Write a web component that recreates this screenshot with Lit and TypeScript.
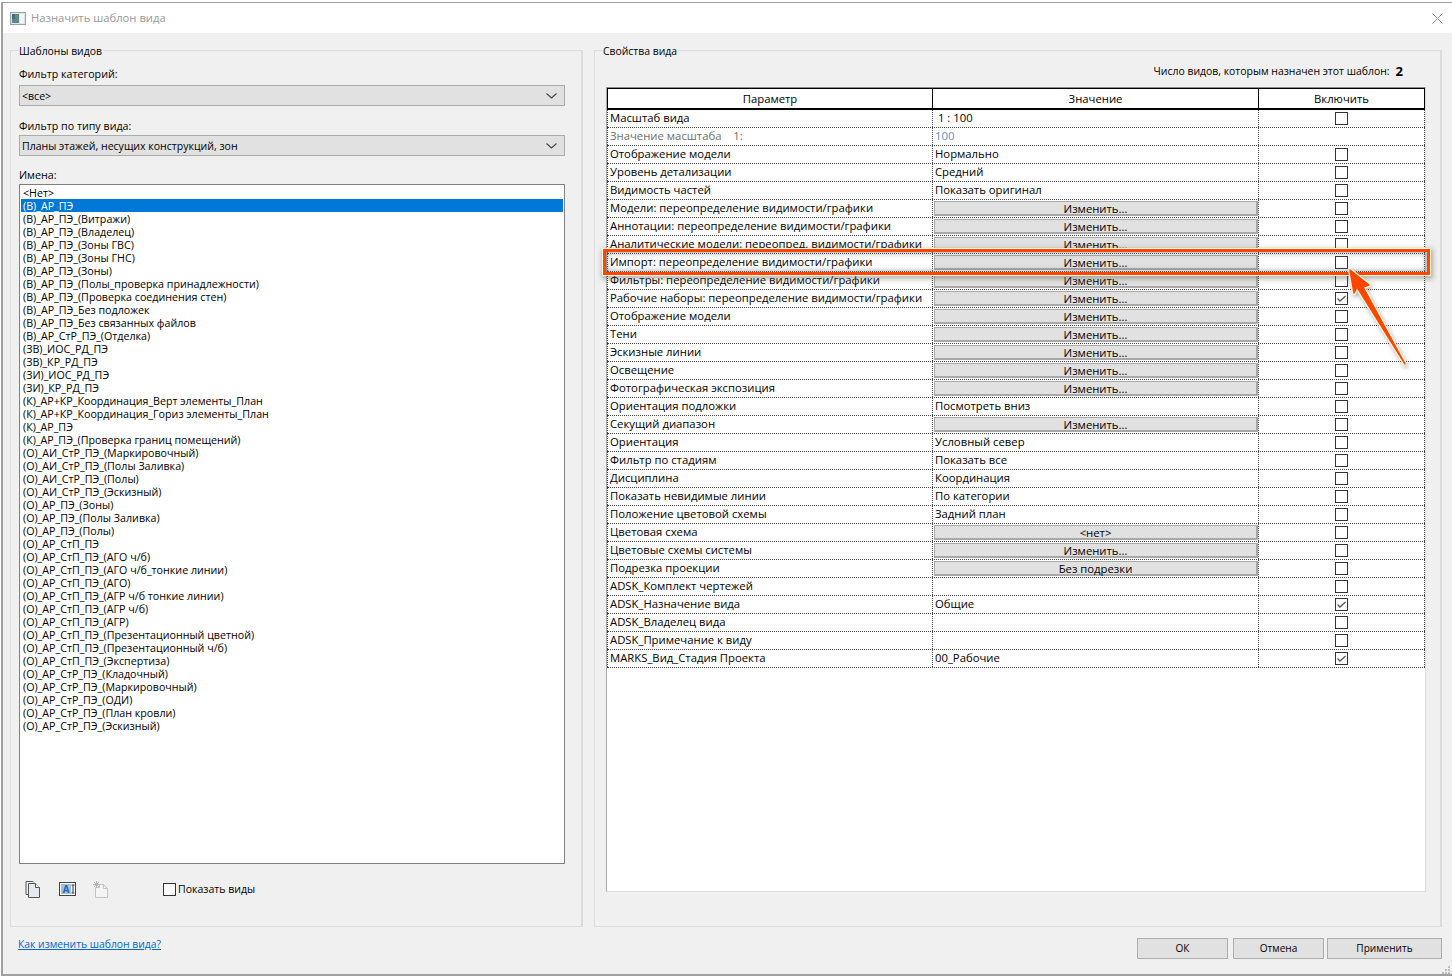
import { LitElement, html, css, svg } from "lit";
import { customElement } from "lit/decorators.js";

const names = ["<Нет>","(В)_АР_ПЭ","(В)_АР_ПЭ_(Витражи)","(В)_АР_ПЭ_(Владелец)","(В)_АР_ПЭ_(Зоны ГВС)","(В)_АР_ПЭ_(Зоны ГНС)","(В)_АР_ПЭ_(Зоны)","(В)_АР_ПЭ_(Полы_проверка принадлежности)","(В)_АР_ПЭ_(Проверка соединения стен)","(В)_АР_ПЭ_Без подложек","(В)_АР_ПЭ_Без связанных файлов","(В)_АР_СтР_ПЭ_(Отделка)","(ЗВ)_ИОС_РД_ПЭ","(ЗВ)_КР_РД_ПЭ","(ЗИ)_ИОС_РД_ПЭ","(ЗИ)_КР_РД_ПЭ","(К)_АР+КР_Координация_Верт элементы_План","(К)_АР+КР_Координация_Гориз элементы_План","(К)_АР_ПЭ","(К)_АР_ПЭ_(Проверка границ помещений)","(О)_АИ_СтР_ПЭ_(Маркировочный)","(О)_АИ_СтР_ПЭ_(Полы Заливка)","(О)_АИ_СтР_ПЭ_(Полы)","(О)_АИ_СтР_ПЭ_(Эскизный)","(О)_АР_ПЭ_(Зоны)","(О)_АР_ПЭ_(Полы Заливка)","(О)_АР_ПЭ_(Полы)","(О)_АР_СтП_ПЭ","(О)_АР_СтП_ПЭ_(АГО ч/б)","(О)_АР_СтП_ПЭ_(АГО ч/б_тонкие линии)","(О)_АР_СтП_ПЭ_(АГО)","(О)_АР_СтП_ПЭ_(АГР ч/б тонкие линии)","(О)_АР_СтП_ПЭ_(АГР ч/б)","(О)_АР_СтП_ПЭ_(АГР)","(О)_АР_СтП_ПЭ_(Презентационный цветной)","(О)_АР_СтП_ПЭ_(Презентационный ч/б)","(О)_АР_СтП_ПЭ_(Экспертиза)","(О)_АР_СтР_ПЭ_(Кладочный)","(О)_АР_СтР_ПЭ_(Маркировочный)","(О)_АР_СтР_ПЭ_(ОДИ)","(О)_АР_СтР_ПЭ_(План кровли)","(О)_АР_СтР_ПЭ_(Эскизный)"];

type Row = { p: string; v?: string; b?: string; c?: boolean; none?: boolean; dim?: boolean };
const E = "Изменить...";
const rows: Row[] = [
  { p: "Масштаб вида", v: "\u00a01 : 100" },
  { p: "Значение масштаба\u00a0\u00a0\u00a0\u00a01:", v: "100", none: true, dim: true },
  { p: "Отображение модели", v: "Нормально" },
  { p: "Уровень детализации", v: "Средний" },
  { p: "Видимость частей", v: "Показать оригинал" },
  { p: "Модели: переопределение видимости/графики", b: E },
  { p: "Аннотации: переопределение видимости/графики", b: E },
  { p: "Аналитические модели: переопред. видимости/графики", b: E },
  { p: "Импорт: переопределение видимости/графики", b: E },
  { p: "Фильтры: переопределение видимости/графики", b: E },
  { p: "Рабочие наборы: переопределение видимости/графики", b: E, c: true },
  { p: "Отображение модели", b: E },
  { p: "Тени", b: E },
  { p: "Эскизные линии", b: E },
  { p: "Освещение", b: E },
  { p: "Фотографическая экспозиция", b: E },
  { p: "Ориентация подложки", v: "Посмотреть вниз" },
  { p: "Секущий диапазон", b: E },
  { p: "Ориентация", v: "Условный север" },
  { p: "Фильтр по стадиям", v: "Показать все" },
  { p: "Дисциплина", v: "Координация" },
  { p: "Показать невидимые линии", v: "По категории" },
  { p: "Положение цветовой схемы", v: "Задний план" },
  { p: "Цветовая схема", b: "<нет>" },
  { p: "Цветовые схемы системы", b: E },
  { p: "Подрезка проекции", b: "Без подрезки" },
  { p: "ADSK_Комплект чертежей" },
  { p: "ADSK_Назначение вида", v: "Общие", c: true },
  { p: "ADSK_Владелец вида" },
  { p: "ADSK_Примечание к виду" },
  { p: "MARKS_Вид_Стадия Проекта", v: "00_Рабочие", c: true },
];

const chevron = html`<svg class="chev" width="11" height="6" viewBox="0 0 11 6"><path d="M.5.5 5.500 5 10.500.5" fill="none" stroke="#444" stroke-width="1.100"/></svg>`;
const tick = svg`<path d="M2.500 6.500 5 9 10.500 4" fill="none" stroke="#555" stroke-width="1.300"/>`;
const arrowD = "M1350 270 1369 285 1363 287 1405 364 1357 287 1354 293z";

@customElement("app-root")
export class AppRoot extends LitElement {
  static styles = css`
    :host { display: block; width: 1452px; height: 977px; overflow: hidden; background: #fff; position: relative;
      font-family: "Open Sans", "Noto Sans", sans-serif; font-size: 10.7px; color: #000; }
    .win { box-sizing: border-box; height: 974px; margin: 2px 0 0 1px; width: 1451px; border: solid #a0a0a0; border-width: 1px 0 2px 2px; display: flex; flex-direction: column; background: #f0f0f0; }
    .title { height: 30px; flex: none; background: #fff; display: flex; align-items: center; padding: 0 9px 0 7px; gap: 5px; color: #999; font-size: 11.25px; }
    .title .t { flex: 1; padding-bottom: 2px; }
    .body { flex: 1; display: grid; grid-template-columns: 573px 848px; column-gap: 11px; padding: 17px 0 0 7px; grid-template-rows: 877px 1fr; }
    .group { border: 1px solid #dcdcdc; border-right-width: 2px; position: relative; box-sizing: border-box; display: flex; flex-direction: column; }
    .legend { position: absolute; left: 7px; top: -6px; background: #f0f0f0; padding: 0 1px; line-height: 13px; font-size: 10.4px; }
    .lhead { display: flex; flex-direction: column; padding: 16px 0 0 8px; }
    .lbl { height: 18px; line-height: 15px; }
    .lbl.two { height: 17px; line-height: 17px; }
    .lbl.three { height: 18px; margin-top: -1px; line-height: 17px; }
    .sel { box-sizing: border-box; width: 546px; height: 21px; border: 1px solid #ababab; background: #e1e1e1; display: flex; align-items: center; justify-content: space-between; padding: 0 7px 0 2px; margin-bottom: 12px; font-size: 10.55px; }
    .list { box-sizing: border-box; width: 546px; height: 680px; border: 1px solid #7f7f7f; background: #fff; padding: 1px 1px; margin-top: -1px; }
    .item { height: 13px; line-height: 15px; padding-left: 2px; white-space: nowrap; }
    .item.on { background: #0078d7; color: #fff; }
    .tools { display: flex; align-items: center; height: 18px; margin-top: 16px; padding-left: 4px; }
    .tools svg { flex: none; }
    .i2 { margin-left: 18px; }
    .i3 { margin-left: 17px; }
    .chk { box-sizing: border-box; width: 13px; height: 13px; border: 1px solid #333; background: #fff; display: block; }
    .show { display: flex; align-items: center; gap: 2px; margin-left: 54px; font-size: 10.55px; }
    .count { height: 36px; display: flex; justify-content: flex-end; align-items: center; padding: 4px 37px 0 0; gap: 6px; box-sizing: border-box; font-size: 10.45px; }
    .count b { font-size: 13px; font-weight: 700; }
    .tablewrap { box-sizing: border-box; margin-left: 11px; width: 820px; height: 805px; background: #fff; border-top: 1px solid #8a8a8a; border-left: 1px solid #a8a8a8; border-right: 1px solid #ddd; border-bottom: 1px solid #ddd; font-size: 11.3px; }
    .row { display: grid; grid-template-columns: 326px 326px 166px; height: 18px; box-sizing: border-box; border-bottom: 1px dotted #444; }
    .row > div { box-sizing: border-box; border-right: 1px dotted #444; white-space: nowrap; overflow: hidden; line-height: 15px; padding-left: 2px; }
    .row > div:first-child { border-left: 1px dotted #444; }
    .head { height: 22px; border-top: 1px solid #000; border-bottom: 2px solid #000; }
    .head > div, .head > div:first-child { border-color: #000; border-style: solid; border-width: 0 1px 0 0; text-align: center; line-height: 19px; padding: 0; }
    .head > div:first-child { border-left: 1px solid #000; }
    .dim { color: #707070; }
    .dimv { color: #5f8fc4; }
    .row > .vb { padding: 0 0 0 1px; }
    .cb { box-sizing: border-box; height: 15px; width: 324px; margin-top: 1px; border: solid #a8a8a8; border-width: 1px 2px 2px 1px; background: #e1e1e1; text-align: center; line-height: 13px; }
    .row > .cc { display: flex; align-items: center; justify-content: center; padding: 0; }
    .cc svg { display: block; }
    .foot { grid-column: 1 / 3; display: flex; align-items: flex-start; justify-content: space-between; padding: 0 0 0 8px; }
    .link { color: #0066cc; text-decoration: underline; margin-top: 10px; font-size: 10.35px; line-height: 15px; }
    .btns { display: flex; gap: 5px; margin-top: 11px; font-size: 10.05px; }
    .btn { box-sizing: border-box; height: 21px; width: 91px; border: 1px solid #adadad; background: #e1e1e1; text-align: center; line-height: 19px; }
    .btn.ap { width: 115px; margin-left: -2px; }
    .grip { position: absolute; right: 1px; bottom: 2px; }
    .hl { position: absolute; left: 603px; top: 249px; width: 827px; height: 26px; box-sizing: border-box; border: 3px solid #ff4500; outline: 1.5px solid #fbf7dc; box-shadow: 1px 2px 5px 2px rgba(90,90,70,.45), inset 0 0 5px 2px rgba(110,110,110,.45); }
    .arrow { position: absolute; left: 0; top: 0; pointer-events: none; }
  `;

  render() {
    return html`
      <div class="win">
        <div class="title">
          <svg width="16" height="15" viewBox="0 0 16 15"><rect x=".5" y="1.500" width="15" height="12" fill="#dfe5e5" stroke="#9aa3a3"/><rect x="2" y="3" width="7" height="9" fill="#5f8a8a"/><rect x="2" y="3" width="3" height="5" fill="#3f6f78"/><rect x="10" y="3" width="4" height="9" fill="#f3f5f5"/></svg>
          <span class="t">Назначить шаблон вида</span>
          <svg width="11" height="11" viewBox="0 0 11 11"><path d="M.5.5l10 10M10.500.5l-10 10" stroke="#8c8c8c" stroke-width="1" fill="none"/></svg>
        </div>
        <div class="body">
          <section class="group">
            <span class="legend">Шаблоны видов</span>
            <div class="lhead">
              <div class="lbl">Фильтр категорий:</div>
              <div class="sel"><span>&lt;все&gt;</span>${chevron}</div>
              <div class="lbl two">Фильтр по типу вида:</div>
              <div class="sel"><span>Планы этажей, несущих конструкций, зон</span>${chevron}</div>
              <div class="lbl three">Имена:</div>
              <div class="list">${names.map((n, i) => html`<div class="item ${i === 1 ? "on" : ""}">${n}</div>`)}</div>
              <div class="tools">
                <svg width="18" height="18" viewBox="0 0 18 18"><path d="M5.500 14.500h-2.500v-13h7l1 1" fill="none" stroke="#555"/><path d="M5.500 3.500h7l4 4v10h-11z" fill="#e6e9ef" stroke="#555"/><path d="M12.500 3.500v4h4" fill="#fff" stroke="#555"/></svg>
                <svg class="i2" width="17" height="14" viewBox="0 0 17 14"><rect x=".5" y=".5" width="16" height="13" fill="#fff" stroke="#444"/><rect x="2" y="2" width="10" height="10" fill="#9fc0e3"/><text x="3.500" y="11" font-size="10" font-weight="700" fill="#1c62b0" font-family="Liberation Sans">A</text><path d="M12.500 3h3M14 3v8M12.500 11h3" stroke="#333" fill="none"/></svg>
                <svg class="i3" width="16" height="17" viewBox="0 0 16 17"><path d="M2.500 6.500h4V3.500h4l4 4v9h-12z" fill="#f4f4f4" stroke="#c4c4c4"/><path d="M10.500 3.500v4h4" fill="none" stroke="#c4c4c4"/><path d="M1 1l5 5M6 1 1 6M3.500 0v7M0 3.500h7" stroke="#b4b4b4" fill="none"/></svg>
                <label class="show"><span class="chk"></span><span>Показать виды</span></label>
              </div>
            </div>
          </section>
          <section class="group">
            <span class="legend">Свойства вида</span>
            <div class="count"><span>Число видов, которым назначен этот шаблон:</span><b>2</b></div>
            <div class="tablewrap">
              <div class="row head"><div>Параметр</div><div>Значение</div><div>Включить</div></div>
              ${rows.map(r => html`<div class="row">
                <div class="${r.dim ? "dim" : ""}">${r.p}</div>
                ${r.b ? html`<div class="vb"><div class="cb">${r.b}</div></div>` : html`<div class="${r.dim ? "dimv" : ""}">${r.v ?? ""}</div>`}
                <div class="cc">${r.none ? "" : html`<svg width="13" height="13" viewBox="0 0 13 13"><rect x=".5" y=".5" width="12" height="12" fill="#fff" stroke="#333"/>${r.c ? tick : ""}</svg>`}</div>
              </div>`)}
            </div>
          </section>
          <div class="foot">
            <span class="link">Как изменить шаблон вида?</span>
            <div class="btns"><div class="btn">ОК</div><div class="btn">Отмена</div><div class="btn ap">Применить</div></div>
          </div>
        </div>
      </div>
      <div class="hl"></div>
      <svg class="arrow" width="1452" height="977" viewBox="0 0 1452 977">
        <defs><filter id="s" x="-30%" y="-30%" width="160%" height="160%"><feDropShadow dx="1" dy="2" stdDeviation="2" flood-color="#555" flood-opacity=".5"/></filter></defs>
        <path d="${arrowD}" fill="#ff4500" stroke="#fbf7dc" stroke-width="4" stroke-linejoin="round" filter="url(#s)"/>
        <path d="${arrowD}" fill="#ff4500" stroke="#ff4500" stroke-width="1.500" stroke-linejoin="round"/>
      </svg>
      <svg class="grip" width="9" height="9" viewBox="0 0 9 9" fill="#bdbdbd"><rect x="6" y="0" width="2" height="2"/><rect x="3" y="3" width="2" height="2"/><rect x="6" y="3" width="2" height="2"/><rect x="0" y="6" width="2" height="2"/><rect x="3" y="6" width="2" height="2"/><rect x="6" y="6" width="2" height="2"/></svg>
    `;
  }
}
